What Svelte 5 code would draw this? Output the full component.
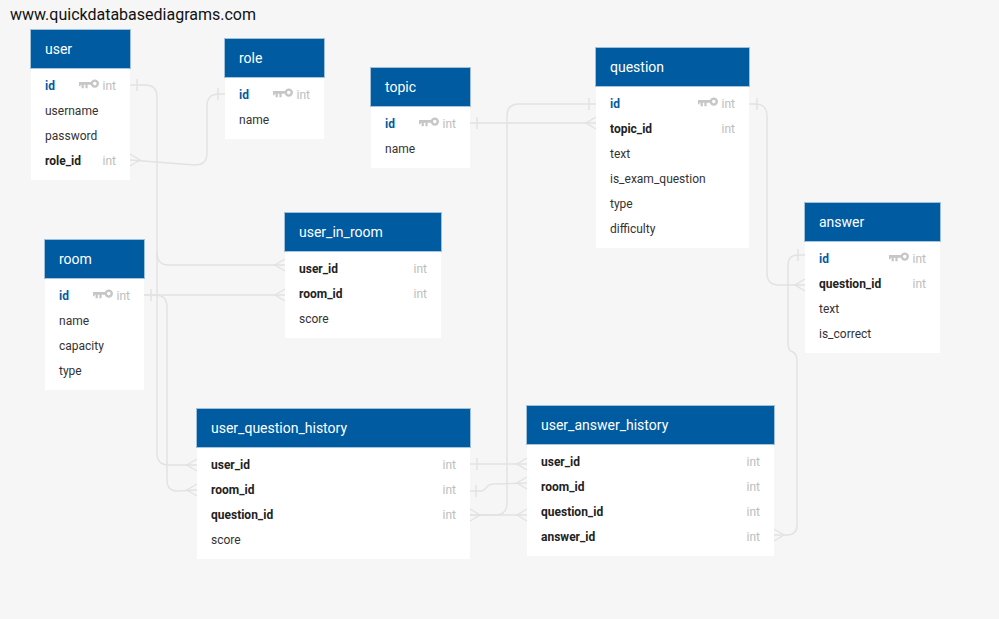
<script>
	const tables = [
		{ name: 'user', x: 31, y: 30, w: 99, rows: [['id', 'pk', 'int'], ['username'], ['password'], ['role_id', 'fk', 'int']] },
		{ name: 'role', x: 225, y: 39, w: 99, rows: [['id', 'pk', 'int'], ['name']] },
		{ name: 'topic', x: 371, y: 68, w: 99, rows: [['id', 'pk', 'int'], ['name']] },
		{ name: 'question', x: 596, y: 48, w: 153, rows: [['id', 'pk', 'int'], ['topic_id', 'fk', 'int'], ['text'], ['is_exam_question'], ['type'], ['difficulty']] },
		{ name: 'answer', x: 805, y: 203, w: 135, rows: [['id', 'pk', 'int'], ['question_id', 'fk', 'int'], ['text'], ['is_correct']] },
		{ name: 'user_in_room', x: 285, y: 213, w: 156, rows: [['user_id', 'fk', 'int'], ['room_id', 'fk', 'int'], ['score']] },
		{ name: 'room', x: 45, y: 240, w: 99, rows: [['id', 'pk', 'int'], ['name'], ['capacity'], ['type']] },
		{ name: 'user_question_history', x: 197, y: 409, w: 273, rows: [['user_id', 'fk', 'int'], ['room_id', 'fk', 'int'], ['question_id', 'fk', 'int'], ['score']] },
		{ name: 'user_answer_history', x: 527, y: 406, w: 247, rows: [['user_id', 'fk', 'int'], ['room_id', 'fk', 'int'], ['question_id', 'fk', 'int'], ['answer_id', 'fk', 'int']] }
	];

	const lines = [
		'M130 85 H145 Q157 85 157 97 V453 Q157 465 169 465 H197',
		'M157 253 Q157 265 169 265 H285',
		'M144 295 H285',
		'M144 295 H155 Q167 295 167 307 V480 Q167 492 179 491 L197 490',
		'M130 160 L195 165 Q207 165 207 153 V106 Q207 94 219 94 H225',
		'M470 123 H596',
		'M596 104 H519 Q507 104 507 116 V503 Q507 515 495 515 H470',
		'M470 515 H527',
		'M470 464 H527',
		'M470 491 H480 C488 491 484 484 494 484 L527 483',
		'M749 104 H755 Q767 104 767 116 V273 Q767 285 779 285 H805',
		'M805 255 H798 Q788 255 788 265 V343 Q788 351 793 352 Q797 354 797 362 V525 Q797 535 787 535 H774'
	];

	// crow's foot: dir is the side the table lies on
	const crows = [
		[285, 265, 1], [285, 295, 1], [197, 465, 1], [197, 490, 1], [596, 123, 1], [805, 285, 1],
		[527, 464, 1], [527, 483, 1], [527, 515, 1], [130, 160, -1], [470, 515, -1], [774, 535, -1]
	];

	const ticks = [
		[137, 85], [151, 295], [218, 94], [477, 123], [589, 104], [757, 104], [798, 255], [477, 464], [476, 491]
	];
</script>

<div class="page">
	<div class="site">www.quickdatabasediagrams.com</div>

	{#each tables as t}
		<section class="table" style="left:{t.x}px;top:{t.y}px;width:{t.w}px">
			<h2>{t.name}</h2>
			<ul>
				{#each t.rows as [col, kind, type]}
					<li class:pk={kind === 'pk'} class:fk={kind === 'fk'}>
						<span class="col">{col}</span>
						{#if kind === 'pk'}
							<svg class="key" width="20" height="11" viewBox="0 0 20 11">
								<circle cx="15.8" cy="4.6" r="3" fill="none" stroke="#c6c6c6" stroke-width="2.4" />
								<path d="M0 3H13V5.8H8.6V9.2H6.4V5.8H4.8V9.2H2.6V5.8H1.6V7.2H0Z" fill="#c6c6c6" />
							</svg>
						{/if}
						{#if type}<span class="type">{type}</span>{/if}
					</li>
				{/each}
			</ul>
		</section>
	{/each}

	<svg class="links" width="999" height="619" viewBox="0 0 999 619">
		{#each lines as d}
			<path {d} />
		{/each}
		{#each crows as [x, y, dir]}
			<path d="M{x} {y - 6} L{x - dir * 10} {y} L{x} {y + 6}" />
		{/each}
		{#each ticks as [x, y]}
			<path d="M{x} {y - 6} V{y + 6}" />
		{/each}
	</svg>
</div>

<style>
	:global(body) {
		margin: 0;
	}
	.page {
		position: relative;
		width: 999px;
		height: 619px;
		overflow: hidden;
		background: #f6f6f7;
		font-family: Roboto, "Liberation Sans", sans-serif;
	}
	.site {
		padding: 5px 10px;
		font-size: 16px;
		line-height: 19px;
		color: #111;
	}
	.links {
		position: absolute;
		left: 0;
		top: 0;
		pointer-events: none;
	}
	.links path {
		fill: none;
		stroke: #e2e2e2;
		stroke-width: 1.4;
	}
	.table {
		position: absolute;
		background: #fff;
	}
	h2 {
		margin: 0;
		height: 38px;
		padding: 0 14px;
		background: #005ba1;
		box-shadow: 0 0 0 1px rgba(0, 91, 161, 0.35);
		color: #fff;
		font-size: 14px;
		font-weight: 400;
		line-height: 38px;
	}
	ul {
		margin: 0;
		padding: 5px 14px 7px;
		list-style: none;
	}
	li {
		display: flex;
		align-items: center;
		height: 25px;
		font-size: 12px;
		color: #333;
	}
	.col {
		flex: 1;
	}
	.pk .col {
		font-weight: 700;
		color: #005ba1;
	}
	.fk .col {
		font-weight: 700;
		color: #222;
	}
	.key {
		margin: -3px 4px 0 0;
	}
	.type {
		color: #bdbdbd;
	}
</style>
